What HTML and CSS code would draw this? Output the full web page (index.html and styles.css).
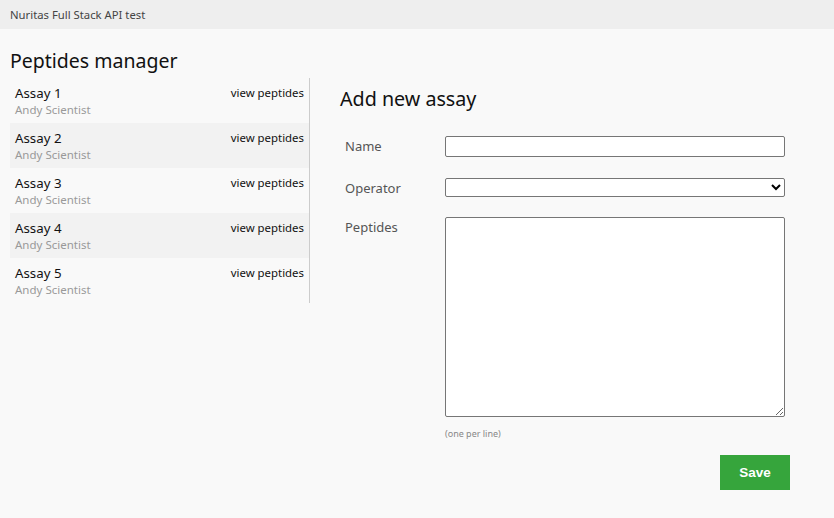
FILE: index.html
```html
<!DOCTYPE html>
<html>
<head>
<meta charset="utf-8">
<link rel="stylesheet" href="styles.css">
</head>
<body>
<header class="topbar">Nuritas Full Stack API test</header>
<main class="page">
  <h1 class="page-title">Peptides manager</h1>
  <div class="content">
    <ul class="assay-list">
      <li class="assay-row">
        <div class="assay-info"><div class="assay-name">Assay 1</div><div class="assay-operator">Andy Scientist</div></div>
        <a class="assay-link">view peptides</a>
      </li>
      <li class="assay-row">
        <div class="assay-info"><div class="assay-name">Assay 2</div><div class="assay-operator">Andy Scientist</div></div>
        <a class="assay-link">view peptides</a>
      </li>
      <li class="assay-row">
        <div class="assay-info"><div class="assay-name">Assay 3</div><div class="assay-operator">Andy Scientist</div></div>
        <a class="assay-link">view peptides</a>
      </li>
      <li class="assay-row">
        <div class="assay-info"><div class="assay-name">Assay 4</div><div class="assay-operator">Andy Scientist</div></div>
        <a class="assay-link">view peptides</a>
      </li>
      <li class="assay-row">
        <div class="assay-info"><div class="assay-name">Assay 5</div><div class="assay-operator">Andy Scientist</div></div>
        <a class="assay-link">view peptides</a>
      </li>
    </ul>
    <section class="form-panel">
      <h2 class="form-title">Add new assay</h2>
      <form class="assay-form">
        <div class="form-row">
          <label class="form-label">Name</label>
          <input class="form-input" type="text">
        </div>
        <div class="form-row form-row-select">
          <label class="form-label">Operator</label>
          <select class="form-select"><option></option></select>
        </div>
        <div class="form-row form-row-tall">
          <label class="form-label">Peptides</label>
          <div class="form-field">
            <textarea class="form-textarea"></textarea>
            <div class="form-hint">(one per line)</div>
          </div>
        </div>
        <div class="form-actions">
          <button type="button" class="save-btn">Save</button>
        </div>
      </form>
    </section>
  </div>
</main>
</body>
</html>
```
FILE: styles.css
```css
* { box-sizing: border-box; }
html, body { margin: 0; padding: 0; }
body {
  background: #f9f9f9;
  font-family: "Noto Sans", "Open Sans", sans-serif;
  color: #111;
}
.topbar {
  height: 29px;
  line-height: 29px;
  background: #eeeeee;
  padding-left: 10px;
  font-size: 11.3px;
  color: #444;
}
.page { padding: 0 10px; }
.page-title {
  margin: 0;
  padding-top: 20px;
  height: 49px;
  line-height: 24px;
  font-size: 19.5px;
  font-weight: 400;
  color: #111;
}
.content { display: flex; align-items: flex-start; }
.assay-list {
  list-style: none;
  margin: 0;
  padding: 0;
  width: 300px;
  border-right: 1px solid #cccccc;
}
.assay-row {
  display: flex;
  justify-content: space-between;
  align-items: flex-start;
  height: 45px;
  padding: 6px 5px 4px;
}
.assay-row:nth-child(even) { background: #f2f2f2; }
.assay-name { font-size: 13.3px; line-height: 18px; color: #111; }
.assay-operator { font-size: 11.5px; line-height: 16px; color: #999; }
.assay-link { font-size: 11.4px; line-height: 18px; color: #111; cursor: pointer; }
.form-panel { flex: 1; padding-left: 30px; }
.form-title {
  margin: 6px 0 22px;
  height: 30px;
  line-height: 30px;
  font-size: 19.7px;
  font-weight: 400;
  color: #111;
}
.form-row { display: flex; align-items: flex-start; margin-bottom: 21px; }
.form-row-select { margin-bottom: 18px; }
.form-label {
  width: 105px;
  padding-left: 5px;
  font-size: 13px;
  line-height: 21px;
  color: #555;
}
.form-input, .form-select, .form-textarea {
  width: 340px;
  margin: 0;
  border: 1px solid #767676;
  border-radius: 2px;
  background: #fff;
  font-family: inherit;
}
.form-input { height: 21px; }
.form-select { height: 19px; font-size: 11px; }
.form-row-tall { margin-bottom: 14px; }
.form-textarea { display: block; height: 200px; resize: vertical; }
.form-hint { margin-top: 10px; font-size: 9px; line-height: 14px; color: #888; }
.form-actions { display: flex; justify-content: flex-end; width: 450px; }
.save-btn {
  width: 70px;
  height: 35px;
  border: none;
  background: #36a53c;
  color: #fff;
  font-family: "Liberation Sans", Arial, sans-serif;
  font-size: 13.5px;
  font-weight: 700;
}
```
